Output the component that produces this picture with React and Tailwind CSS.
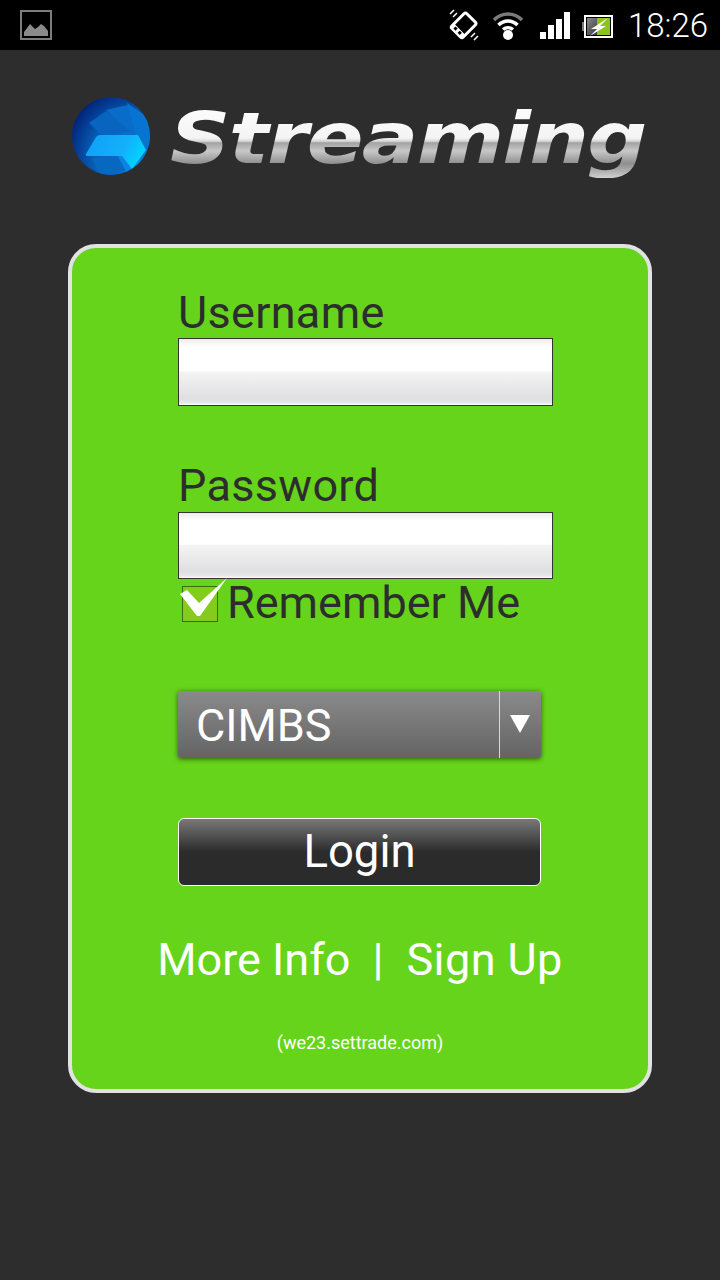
import React from 'react'

function GalleryIcon() {
  return (
    <svg width="32" height="30" viewBox="0 0 32 30">
      <rect x="1" y="1" width="30" height="28" fill="none" stroke="#7d7d7d" strokeWidth="2" />
      <path d="M4 26V22L10 14L15 19L18 17L21 14L24 16L28 21V26Z" fill="#8a8a8a" />
    </svg>
  )
}

function RotateIcon() {
  return (
    <svg width="34" height="32" viewBox="0 0 34 32">
      <g transform="rotate(45 17 16)">
        <rect x="9" y="6" width="16" height="21" rx="2" fill="none" stroke="#fff" strokeWidth="3" />
        <path d="M9 22H25V27H9Z" fill="#fff" />
        <rect x="12" y="23" width="3" height="3" fill="#000" />
        <rect x="18" y="23" width="3" height="3" fill="#000" />
      </g>
      <path d="M3 5L7 1M6 8L10 4M24 28L28 24M27 31L31 27" stroke="#fff" strokeWidth="1.5" />
    </svg>
  )
}

function WifiIcon() {
  return (
    <svg width="32" height="29" viewBox="0 0 32 29">
      <path d="M2 9C10 1 22 1 30 9" fill="none" stroke="#7a7a7a" strokeWidth="3.5" />
      <path d="M6.5 14C12 8.5 20 8.5 25.5 14" fill="none" stroke="#fff" strokeWidth="3.5" />
      <path d="M11 18.5C14 16 18 16 21 18.5" fill="none" stroke="#fff" strokeWidth="3.5" />
      <circle cx="16" cy="24" r="5" fill="#fff" />
    </svg>
  )
}

function SignalIcon() {
  return (
    <svg width="30" height="27" viewBox="0 0 30 27" fill="#fff">
      <rect x="0" y="20" width="6" height="7" />
      <rect x="8" y="13" width="6" height="14" />
      <rect x="16" y="7" width="6" height="20" />
      <rect x="24" y="0" width="6" height="27" />
    </svg>
  )
}

function BatteryIcon() {
  return (
    <svg width="31" height="23" viewBox="0 0 31 23">
      <defs>
        <linearGradient id="batt" x1="0" y1="0" x2="1" y2="1">
          <stop offset="0" stopColor="#8a8a8a" />
          <stop offset="1" stopColor="#333" />
        </linearGradient>
      </defs>
      <rect x="0" y="7" width="2" height="9" fill="#777" />
      <rect x="3" y="1" width="27" height="21" fill="#000" stroke="#fff" strokeWidth="2" />
      <rect x="5" y="3" width="12" height="17" fill="url(#batt)" />
      <rect x="15" y="3" width="13" height="17" fill="#8cc41f" />
      <path d="M26 3L9 14H15L8 21L24 11H18Z" fill="#fff" />
    </svg>
  )
}

function LogoGlobe() {
  return (
    <svg width="78" height="78" viewBox="0 0 78 78">
      <defs>
        <radialGradient id="globe" cx="0.8" cy="0.75" r="0.95">
          <stop offset="0" stopColor="#0a7fe0" />
          <stop offset="0.55" stopColor="#0660b8" />
          <stop offset="1" stopColor="#02186e" />
        </radialGradient>
        <linearGradient id="bright" x1="0" y1="0" x2="1" y2="0.3">
          <stop offset="0" stopColor="#0f9ff7" />
          <stop offset="0.7" stopColor="#14b0fb" />
          <stop offset="1" stopColor="#00d2ff" />
        </linearGradient>
        <clipPath id="globeClip">
          <circle cx="39" cy="39" r="39" />
        </clipPath>
      </defs>
      <circle cx="39" cy="39" r="39" fill="url(#globe)" />
      <g clipPath="url(#globeClip)">
        <path d="M17 26L34 14L62 34L30 38Z" fill="#0765bf" />
        <path d="M34 13L56 8L70 34L62 38Z" fill="#086cc8" />
        <path d="M55 6L78 22V50L64 38Z" fill="#0874d2" />
        <path d="M20 62L44 56L58 72L30 80Z" fill="#0768c2" />
        <path d="M44 56L60 50L72 66L56 78Z" fill="#0a84e0" />
        <path d="M14 57Q13 59 16 59H50L60 72L74 53L66 38H28Q26 38 24 40Z" fill="url(#bright)" />
      </g>
    </svg>
  )
}

function CheckMark() {
  return (
    <svg width="50" height="46" viewBox="0 0 50 46" className="absolute left-0 top-0 overflow-visible">
      <path d="M2 15L9 11L21 24L49 -1L22 37H19Z" fill="#fff" />
    </svg>
  )
}

export default function App() {
  return (
    <div className="w-[720px] h-[1280px] bg-[#2d2d2d] font-['Roboto',sans-serif] overflow-hidden">
      {/* status bar */}
      <header className="h-[50px] bg-black flex items-center">
        <div className="ml-5">
          <GalleryIcon />
        </div>
        <div className="ml-auto flex items-center">
          <RotateIcon />
          <div className="ml-[11px]"><WifiIcon /></div>
          <div className="ml-[16px] mt-[1px]"><SignalIcon /></div>
          <div className="ml-[12px] mt-[2px]"><BatteryIcon /></div>
          <span className="ml-[15px] mr-3 w-[80px] text-[33px] leading-none font-light text-white">18:26</span>
        </div>
      </header>

      {/* logo */}
      <div className="h-[194px] pl-[72px] pt-[47px] flex items-start">
        <LogoGlobe />
        <div className="ml-[20px] mt-[1px] h-[80px] origin-left scale-x-[1.165] text-[72px] leading-[80px] italic font-bold font-['DejaVu_Sans',sans-serif] tracking-[-1.5px] text-transparent bg-clip-text bg-[linear-gradient(180deg,#fff_0%,#f4f4f4_50%,#d8d8d8_54%,#a2a2a2_56%,#c8c8c8_66%,#8e8e8e_82%,#d0d0d0_100%)]">
          Streaming
        </div>
      </div>

      {/* login card */}
      <main className="ml-[68px] w-[584px] h-[849px] border-4 border-[#e2e2e2] rounded-[28px] bg-[#66d41a] pl-[106px] pr-[95px] text-[#2d2d2d]">
        <div className="h-[48px] mt-[42px] text-[45px] tracking-[0.3px] leading-[46px]">Username</div>
        <div className="h-[68px] w-[375px] border border-[#333] bg-[linear-gradient(180deg,#ececec_0%,#fff_12%,#fff_48%,#f4f4f4_50%,#dfdfe2_90%,#e8e8ea_97%,#fff_100%)]" />

        <div className="h-[48px] mt-[58px] text-[45px] tracking-[0.3px] leading-[44px]">Password</div>
        <div className="h-[67px] w-[375px] border border-[#333] bg-[linear-gradient(180deg,#ececec_0%,#fff_12%,#fff_48%,#f4f4f4_50%,#dfdfe2_90%,#e8e8ea_97%,#fff_100%)]" />

        <div className="relative h-[46px] flex items-start">
          <div className="mt-[7px] ml-[4px] w-[36px] h-[36px] border border-[#3a6b10] bg-[#84cc1c]" />
          <CheckMark />
          <span className="ml-[9px] text-[45px] leading-[48px]">Remember Me</span>
        </div>

        <div className="mt-[66px] w-[363px] h-[67px] flex rounded-[3px] bg-[linear-gradient(180deg,#8a8a8a,#646464)] shadow-[0_1px_5px_rgba(0,0,0,0.6)] text-white">
          <span className="flex-1 pl-[18px] text-[45px] leading-[69px] border-r border-[#d8d8d8]">CIMBS</span>
          <div className="w-[41px] flex justify-center pt-[24px] pr-[2px]">
            <svg width="20" height="18" viewBox="0 0 20 18">
              <path d="M0 0H20L10 18Z" fill="#fff" />
            </svg>
          </div>
        </div>

        <button className="block mt-[60px] w-[363px] h-[68px] border border-white rounded-[6px] bg-[linear-gradient(180deg,#787878_0%,#2b2b2b_50%,#2b2b2b_100%)] text-white text-[45.5px] leading-[64px] text-center">
          Login
        </button>

        <div className="mt-[44px] -ml-[106px] w-[576px] flex justify-center text-white text-[45px] leading-[60px]">
          <span>More Info</span>
          <span className="ml-[22px]">|</span>
          <span className="ml-[23px] tracking-[0.4px]">Sign Up</span>
        </div>

        <div className="mt-[41px] -ml-[106px] w-[576px] text-center text-white text-[18px] leading-[24px]">
          (we23.settrade.com)
        </div>
      </main>
    </div>
  )
}
